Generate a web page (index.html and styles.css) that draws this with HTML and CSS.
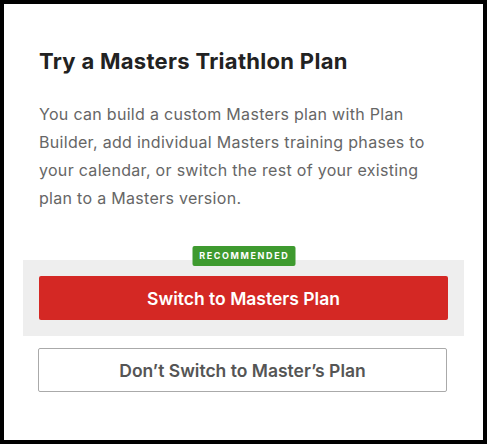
FILE: index.html
```html
<!DOCTYPE html>
<html>
<head>
<meta charset="utf-8">
<link rel="stylesheet" href="styles.css">
</head>
<body>
<div class="card">
  <h1 class="title">Try a Masters Triathlon Plan</h1>
  <p class="desc">You can build a custom Masters plan with Plan Builder, add individual Masters training phases to your calendar, or switch the rest of your existing plan to a Masters version.</p>
  <div class="recommend">
    <span class="badge">RECOMMENDED</span>
    <button class="btn btn-primary">Switch to Masters Plan</button>
  </div>
  <button class="btn btn-outline">Don’t Switch to Master’s Plan</button>
</div>
</body>
</html>
```
FILE: styles.css
```css
html, body {
  margin: 0;
  padding: 0;
  background: #000;
}
body {
  padding: 4px;
  height: 444px;
  box-sizing: border-box;
}
.card {
  background: #fff;
  height: 436px;
  box-sizing: border-box;
  padding: 45px 35px 0;
  font-family: Inter, "Open Sans", sans-serif;
  display: flex;
  flex-direction: column;
}
.title {
  margin: 0;
  font-size: 22px;
  line-height: 24px;
  font-weight: 700;
  letter-spacing: 0.3px;
  color: #222;
}
.desc {
  margin: 27px 0 0;
  font-size: 16px;
  line-height: 28px;
  letter-spacing: 0.3px;
  color: #666;
}
.recommend {
  position: relative;
  margin: 48px -16px 0;
  padding: 16px;
  background: #eee;
  display: flex;
  flex-direction: column;
}
.badge {
  position: absolute;
  top: -14px;
  left: 50%;
  transform: translateX(-50%);
  width: 103px;
  height: 20px;
  line-height: 20px;
  box-sizing: border-box;
  text-align: center;
  background: #3e9a2f;
  color: #fff;
  font-size: 9px;
  font-weight: 700;
  letter-spacing: 1.6px;
  text-indent: 1.6px;
  border-radius: 2px;
}
.btn {
  display: block;
  width: 100%;
  height: 44px;
  border-radius: 2px;
  font-family: Inter, "Open Sans", sans-serif;
  font-size: 17.5px;
  font-weight: 600;
  cursor: pointer;
}
.btn-primary {
  background: #d42824;
  border: none;
  color: #fff;
}
.btn-outline {
  margin: 12px 0 0 -1px;
  background: #fff;
  border: 1px solid #aaa;
  color: #555;
}
```
